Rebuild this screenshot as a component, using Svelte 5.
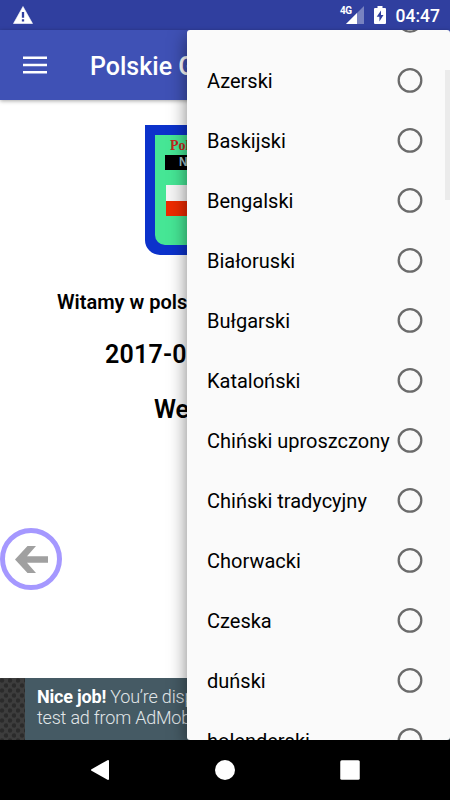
<script>
    // the first row is scrolled almost completely out of the list
    let languages = ["", "Azerski", "Baskijski", "Bengalski", "Białoruski", "Bułgarski", "Kataloński", "Chiński uproszczony", "Chiński tradycyjny", "Chorwacki", "Czeska", "duński", "holenderski"];
    let selected = null;
</script>

<div class="screen">
    <header class="status-bar">
        <svg class="warning" width="20" height="18" viewBox="0 0 20 18">
            <path d="M10 .5 19.5 17.500H.5Z" fill="#fff" stroke="#fff" stroke-width=".6" stroke-linejoin="round"/>
            <path d="M10 6v5.800M10 13.300v2.200" stroke="#303f9f" stroke-width="2.300"/>
        </svg>
        <div class="signal">
            <span class="network">4G</span>
            <svg width="18" height="18" viewBox="0 0 18 18">
                <path d="M18 0v18H0Z" fill="#fff" opacity=".35"/>
                <path d="M11 7v11H0Z" fill="#fff"/>
            </svg>
        </div>
        <svg class="battery" width="12" height="18" viewBox="0 0 12 18">
            <path d="M3.500 0h5v2H11q1 0 1 1v14q0 1-1 1H1q-1 0-1-1V3q0-1 1-1h2.500Z" fill="#fff"/>
            <path d="M7 4.500 2.700 10.800h2.700v4.700L9.500 9H7Z" fill="#303f9f"/>
        </svg>
        <span class="clock">04:47</span>
    </header>

    <div class="toolbar">
        <svg width="24" height="18" viewBox="0 0 24 18">
            <path d="M0 1.750h24M0 9h24M0 16.250h24" stroke="#fff" stroke-width="2.500"/>
        </svg>
        <h1>Polskie G</h1>
    </div>

    <main>
        <div class="emblem">
            <div class="shield">
                <div class="shield-name">Pols</div>
                <div class="shield-band">NA</div>
                <div class="flag"></div>
            </div>
        </div>
        <p class="welcome">Witamy w pols</p>
        <p class="date">2017-0</p>
        <p class="version">We</p>
        <button class="back" aria-label="back">
            <svg width="33" height="27" viewBox="0 0 33 27">
                <path d="M0 13.500 12.500 0H21l-9 10.200h21v6.600H12L21 27h-8.500Z" fill="#a0a0a0"/>
            </svg>
        </button>
    </main>

    <div class="ad">
        <svg class="ad-pattern" width="25" height="62">
            <defs>
                <pattern id="mesh" width="8" height="10" patternUnits="userSpaceOnUse">
                    <rect width="8" height="10" fill="#3d3d3d"/>
                    <circle cx="2" cy="2.500" r="2.200" fill="#2b2b2b"/>
                    <circle cx="6" cy="7.500" r="2.200" fill="#2b2b2b"/>
                </pattern>
            </defs>
            <rect width="25" height="62" fill="url(#mesh)"/>
        </svg>
        <div class="ad-text"><b>Nice job!</b> You’re disp<br>test ad from AdMob</div>
    </div>

    <nav>
        <svg width="18" height="20" viewBox="0 0 18 20">
            <path d="M17 1v18L1 10Z" fill="#fff" stroke="#fff" stroke-width="2" stroke-linejoin="round"/>
        </svg>
        <svg width="20" height="20" viewBox="0 0 20 20">
            <circle cx="10" cy="10" r="10" fill="#fff"/>
        </svg>
        <svg width="20" height="20" viewBox="0 0 20 20">
            <rect width="19.500" height="19.500" x=".25" y=".25" rx="1.500" fill="#fff"/>
        </svg>
    </nav>

    <div class="overlay">
        <div class="menu">
            <div class="list">
                {#each languages as language, i}
                <button class="row" aria-label={language || "language"} on:click={() => selected = i}>
                    <span class="label">{language}</span>
                    <svg class="radio {(selected === i)? "active":""}" width="26" height="26" viewBox="0 0 26 26">
                        <circle cx="13" cy="13.400" r="11.300" fill="none" stroke-width="2.300"/>
                        <circle class="dot" cx="13" cy="13.400" r="6"/>
                    </svg>
                </button>
                {/each}
            </div>
            <div class="scrollbar"></div>
        </div>
    </div>
</div>

<style>
    :global(body){
        background-color: white;
    }
    .screen{
        position: relative;
        width: 450px;
        height: 800px;
        display: flex;
        flex-direction: column;
        overflow: hidden;
        background-color: white;
        font-family: Roboto, sans-serif;
        color: black;
        white-space: nowrap;
    }
    svg{
        display: block;
        flex: none;
    }
    button{
        border: none;
        background: none;
        padding: 0;
        font: inherit;
        color: inherit;
        text-align: left;
    }
    .status-bar{
        box-sizing: border-box;
        flex: none;
        height: 30px;
        display: flex;
        align-items: center;
        padding: 0 10px 0 13px;
        background-color: #303f9f;
        color: white;
    }
    .warning{
        margin-right: auto;
    }
    .signal{
        display: flex;
        align-items: center;
    }
    .network{
        align-self: flex-start;
        margin: -1px -6px 0 0;
        font-size: 10px;
        line-height: 12px;
        font-weight: 700;
        letter-spacing: -0.5px;
    }
    .battery{
        margin: 0 10px 0 10px;
    }
    .clock{
        font-size: 17.5px;
        font-weight: 500;
        line-height: 30px;
        padding-top: 1px;
    }
    .toolbar{
        box-sizing: border-box;
        flex: none;
        height: 70px;
        display: flex;
        align-items: center;
        gap: 43px;
        padding-left: 23px;
        padding-bottom: 1px;
        background-color: #3f51b5;
        color: white;
        box-shadow: 0 1px 4px rgba(0, 0, 0, 0.35);
    }
    h1{
        margin: 0;
        padding-top: 3px;
        font-size: 25px;
        font-weight: 500;
    }
    main{
        flex: 1;
        min-height: 0;
        padding-top: 25px;
    }
    .emblem{
        box-sizing: border-box;
        width: 130px;
        height: 130px;
        margin-left: 145px;
        padding: 10px;
        background-color: #0c32cb;
        border-radius: 0 0 15px 15px;
    }
    .shield{
        box-sizing: border-box;
        height: 110px;
        padding-left: 10px;
        background-color: #46e695;
        border-radius: 0 0 10px 10px;
        overflow: hidden;
    }
    .shield-name{
        height: 20px;
        padding-left: 5px;
        font: bold 14px/21px "Liberation Serif", serif;
        color: #c5271c;
    }
    .shield-band{
        height: 15px;
        padding-left: 14px;
        background-color: black;
        font: bold 12px/15px "Liberation Sans", sans-serif;
        color: #a5c6cc;
    }
    .flag{
        height: 31px;
        margin: 15px 0 0 1px;
        background: linear-gradient(#f5f5f5 50%, #ee2a00 50%);
    }
    p{
        margin: 0;
        font-weight: 600;
    }
    .welcome{
        padding: 35px 0 0 57px;
        font-size: 20px;
        line-height: 24px;
    }
    .date{
        padding: 26px 0 0 105px;
        font-size: 25px;
        line-height: 30px;
        letter-spacing: 0.2px;
    }
    .version{
        padding: 25px 0 0 154px;
        font-size: 25px;
        line-height: 30px;
    }
    .back{
        box-sizing: border-box;
        display: flex;
        align-items: center;
        justify-content: center;
        width: 62px;
        height: 62px;
        margin-top: 103px;
        border: 5px solid #a598ff;
        border-radius: 50%;
    }
    .ad{
        flex: none;
        height: 62px;
        display: flex;
        background-color: #455a64;
    }
    .ad-text{
        padding: 8px 0 0 12px;
        font-size: 18px;
        line-height: 21px;
        font-weight: 300;
        letter-spacing: -0.2px;
        color: #e1e6e8;
    }
    .ad-text b{
        font-weight: 700;
        color: white;
    }
    nav{
        box-sizing: border-box;
        flex: none;
        height: 60px;
        display: flex;
        align-items: center;
        justify-content: space-between;
        padding: 0 90px 0 91px;
        background-color: black;
    }
    /* language picker lies over the page, between the system bars */
    .overlay{
        position: absolute;
        top: 30px;
        left: 0;
        right: 0;
        height: 710px;
        overflow: hidden;
    }
    .menu{
        height: 710px;
        margin-left: 187px;
        display: flex;
        overflow: hidden;
        background-color: #fafafa;
        border-radius: 3px;
        box-shadow: 0 6px 18px rgba(0, 0, 0, 0.5);
    }
    .list{
        flex: 1;
        min-width: 0;
        margin-top: -40px;
    }
    .row{
        display: flex;
        align-items: center;
        justify-content: space-between;
        width: 100%;
        height: 60px;
        padding: 0 22px 0 20px;
        font-size: 20px;
    }
    .label{
        padding-top: 2px;
    }
    .radio{
        stroke: #6b6b6b;
    }
    .dot{
        display: none;
    }
    .radio.active{
        stroke: #ff4081;
        fill: #ff4081;
    }
    .radio.active .dot{
        display: block;
    }
    .scrollbar{
        flex: none;
        width: 5px;
        height: 130px;
        margin-top: 40px;
        background-color: #ebebeb;
    }
</style>
